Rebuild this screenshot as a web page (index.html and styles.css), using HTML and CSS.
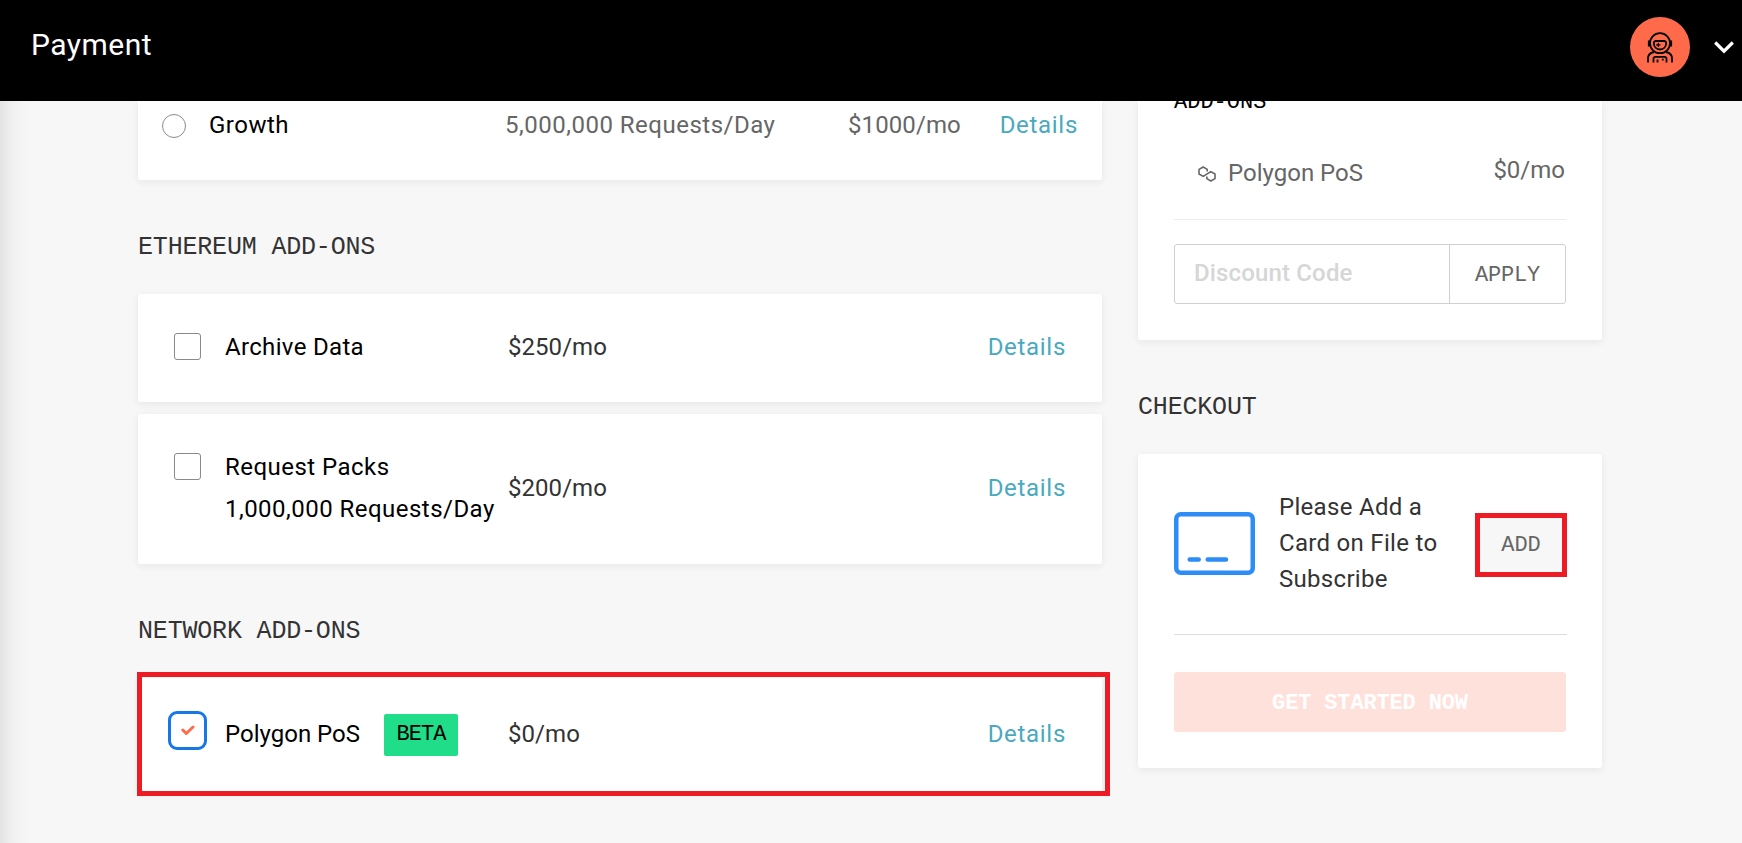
FILE: index.html
```html
<!DOCTYPE html>
<html lang="en">
<head>
<meta charset="utf-8">
<title>Payment</title>
<link rel="stylesheet" href="styles.css">
</head>
<body>
<header class="topbar">
  <h1 class="topbar-title">Payment</h1>
  <div class="account">
    <span class="avatar">
      <svg width="26" height="31" viewBox="0 0 26 31" fill="none" stroke="#000" stroke-width="1.800">
        <circle cx="13" cy="11.2" r="10"/>
        <path d="M9 9h8a2 2 0 0 1 2.200 2.200c-.2 3.600-2.600 6.300-6.200 6.300s-6-2.700-6.200-6.300A2 2 0 0 1 9 9z"/>
        <path d="M11.300 10.700v4.400M9.100 12.900h4.400" stroke-width="1.200"/>
        <path d="M2.200 8.500v6M23.800 8.500v6" stroke-width="2.600"/>
        <path d="M7 20C3.500 20.800 1 23 1 26.500v4M19 20c3.500.8 6 3 6 6.500v4"/>
        <path d="M6.500 30.500v-3.700a2 2 0 0 1 2-2h9a2 2 0 0 1 2 2v3.700M10.500 27.500v3M15.800 26.800v1.800"/>
      </svg>
    </span>
    <svg class="chevron" width="20" height="13" viewBox="0 0 20 13" fill="none" stroke="#fff" stroke-width="3.200"><path d="M1.200 1.500 10 10.200 18.800 1.500"/></svg>
  </div>
</header>
<main class="page">
  <section class="plans">
    <div class="card plan-card">
      <span class="radio"></span>
      <span class="plan-name">Growth</span>
      <span class="plan-quota">5,000,000 Requests/Day</span>
      <span class="plan-price">$1000/mo</span>
      <a class="details">Details</a>
    </div>
    <h2 class="heading">ETHEREUM ADD-ONS</h2>
    <div class="card addon">
      <span class="checkbox"></span>
      <span class="addon-name">Archive Data</span>
      <span class="addon-price">$250/mo</span>
      <a class="details">Details</a>
    </div>
    <div class="card addon addon-tall">
      <span class="checkbox"></span>
      <span class="addon-name">Request Packs<br>1,000,000 Requests/Day</span>
      <span class="addon-price">$200/mo</span>
      <a class="details">Details</a>
    </div>
    <h2 class="heading">NETWORK ADD-ONS</h2>
    <div class="card addon addon-network">
      <span class="checkbox checked"><svg width="14" height="11" viewBox="0 0 14 11" fill="none" stroke="#ff6b4a" stroke-width="3" stroke-linecap="round" stroke-linejoin="round"><path d="M1.800 5 5.300 8.500 12 2"/></svg></span>
      <span class="addon-name with-badge"><span class="network-name">Polygon PoS</span><span class="badge">BETA</span></span>
      <span class="addon-price">$0/mo</span>
      <a class="details">Details</a>
      <span class="highlight"></span>
    </div>
  </section>
  <aside class="summary">
    <div class="card order">
      <h3 class="order-title">ADD-ONS</h3>
      <div class="order-line">
        <svg class="polygon" width="18" height="16" viewBox="0 0 18 16" fill="none" stroke="#666" stroke-width="1.600" stroke-linejoin="round"><path d="M7.300 9.200 5 10.500 1 8.200V3.300L5 1l4 2.300v9.200l4 2.300 4-2.300V7.600l-4-2.300-2.300 1.300" stroke="none"/><path d="M11.500 6.200 5.200 10.400 1 8V3.400L5.200 1l4 2.400v2.800M6.500 9.700l6.300-4.200L17 7.900v4.700L12.800 15l-4-2.400V9.800" stroke="none"/><path d="M9.200 5.500V3.400L5.200 1 1 3.400V8l4.200 2.400L12.800 5.600 17 8v4.600L12.800 15l-4-2.400v-2.100"/></svg>
        <span class="order-name">Polygon PoS</span>
        <span class="order-price">$0/mo</span>
      </div>
      <div class="discount">
        <span class="discount-input">Discount Code</span>
        <span class="discount-apply">APPLY</span>
      </div>
    </div>
    <h2 class="heading">CHECKOUT</h2>
    <div class="card checkout">
      <div class="payment">
        <svg width="81" height="63" viewBox="0 0 81 63" fill="none" stroke="#2d8cf5" stroke-width="4.500"><rect x="2.250" y="2.250" width="76.500" height="58.500" rx="4.500"/><path d="M15.700 47.500h9M33.700 47.500H52" stroke-linecap="round"/></svg>
        <p class="payment-text">Please Add a<br>Card on File to<br>Subscribe</p>
        <span class="add">ADD</span>
      </div>
      <div class="start">GET STARTED NOW</div>
    </div>
  </aside>
</main>
</body>
</html>
```

FILE: styles.css
```css
* { box-sizing: border-box; }
body {
  margin: 0;
  height: 843px;
  overflow: hidden;
  background: #f7f7f7;
  font: 24px/36px Roboto, sans-serif;
  color: #333;
  white-space: nowrap;
}
h1, h2, h3, p { margin: 0; font-weight: 400; }
.topbar {
  position: relative;
  z-index: 1;
  height: 101px;
  padding: 0 8px 0 31px;
  display: flex;
  justify-content: space-between;
  background: #000;
}
.topbar-title {
  font-size: 30px;
  line-height: 90px;
  letter-spacing: 0.5px;
  color: #fff;
}
.account { display: flex; align-items: center; gap: 24px; height: 94px; }
.avatar {
  width: 60px;
  height: 60px;
  border-radius: 50%;
  background: #ff6b4a;
  display: flex;
  align-items: center;
  justify-content: center;
}
.page {
  height: 742px;
  padding-left: 138px;
  display: flex;
  gap: 36px;
  background: linear-gradient(90deg, #e3e3e3 0, #eeeeee 10px, #f5f5f5 22px, #f7f7f7 34px);
}
.plans { width: 964px; }
.summary { width: 464px; }
.card {
  background: #fff;
  border-radius: 3px;
  box-shadow: 0 2px 8px rgba(0, 0, 0, 0.07);
}
.heading {
  margin: 50px 0 28px;
  font: 25px/36px "Liberation Mono", monospace;
  letter-spacing: -0.18px;
}
.plan-card {
  height: 79px;
  padding: 6px 24px 0;
  display: grid;
  grid-template-columns: 24px 272px 343px 152px auto;
  border-radius: 0 0 3px 3px;
  color: #666;
}
.radio { width: 24px; height: 24px; margin-top: 7px; border: 1px solid #8a8a8a; border-radius: 50%; }
.plan-name { padding-left: 23px; letter-spacing: 0.5px; color: #000; }
.plan-quota { padding-left: 47px; letter-spacing: 0.5px; }
.plan-price { padding-left: 47px; letter-spacing: 0.1px; }
.details { justify-self: end; color: #4aa9bf; letter-spacing: 0.7px; }
.addon {
  position: relative;
  height: 108px;
  padding: 35px 36px 37px;
  display: grid;
  grid-template-columns: 27px 307px 1fr auto;
  align-items: center;
  letter-spacing: 0.33px;
}
.addon-tall { height: 150px; padding: 32px 36px 40px; margin-top: 12px; }
.addon-tall .addon-name { line-height: 42px; letter-spacing: 0.47px; }
.addon-tall .checkbox { margin-top: 7px; }
.addon-network { height: 114px; padding: 36px; }
.addon-network .checkbox { margin-top: 3px; }
.addon-network .addon-price, .addon-network .details { margin-top: -2px; }
.addon-price, .addon-tall .addon-price { letter-spacing: 0.05px; }
.addon .checkbox + .addon-name + .addon-price + .details { letter-spacing: 0.7px; }
.checkbox {
  width: 27px;
  height: 27px;
  margin-top: 4px;
  align-self: start;
  border: 1px solid #8a8a8a;
  border-radius: 3px;
  display: flex;
  align-items: center;
  justify-content: center;
}
.checked { border: 0; outline: 3px solid #1677e5; outline-offset: 3px; }
.addon-name { padding-left: 24px; color: #000; }
.with-badge { display: flex; align-items: center; gap: 24px; letter-spacing: 0; }
.network-name { margin-top: -2px; }
.badge {
  width: 74px;
  height: 42px;
  border-radius: 2px;
  background: #20dd8a;
  font: 22px/41px "Liberation Mono", monospace;
  letter-spacing: -1px;
  text-align: center;
}
.highlight {
  position: absolute;
  left: -1px;
  top: -6px;
  width: 973px;
  height: 124px;
  border: 5px solid #ed1c24;
}
.order {
  display: flow-root;
  height: 239px;
  padding: 0 36px;
  border-radius: 0 0 3px 3px;
  color: #666;
}
.order-title {
  height: 46px;
  margin-top: -16px;
  font: 22px/36px "Liberation Mono", monospace;
  color: #000;
}
.order-line {
  height: 89px;
  padding: 21px 1px 0 24px;
  display: flex;
  border-bottom: 1px solid #ececec;
}
.polygon { margin-top: 14px; }
.order-name { margin: 3px 0 0 12px; }
.order-price { margin-left: auto; }
.discount {
  height: 60px;
  margin-top: 24px;
  display: grid;
  grid-template: 58px / 275px 1fr;
  border: 1px solid #d0d0d0;
  border-radius: 3px;
  line-height: 57px;
}
.discount-input { padding-left: 19px; border-right: 1px solid #d0d0d0; color: #d6d6d6; font-weight: 500; letter-spacing: 0.15px; }
.discount-apply { text-align: center; font: 22px/61px "Liberation Mono", monospace; letter-spacing: -0.2px; }
.checkout { height: 314px; padding: 36px; }
.payment {
  height: 145px;
  padding-bottom: 38px;
  display: grid;
  grid-template-columns: 81px 1fr 92px;
  align-items: center;
  margin-right: -1px;
  box-shadow: inset 0 -1px #ddd;
}
.payment-text { padding-left: 24px; margin-top: -2px; letter-spacing: 0.3px; }
.add {
  height: 64px;
  margin-top: 2px;
  border: 5px solid #ed1c24;
  background: #f7f7f7;
  color: #666;
  text-align: center;
  font: 22px/55px "Liberation Mono", monospace;
}
.start {
  height: 60px;
  margin-top: 37px;
  border-radius: 3px;
  background: #ffe1db;
  color: #fff;
  text-align: center;
  font: bold 22px/63px "Liberation Mono", monospace;
  letter-spacing: -0.15px;
}
```
